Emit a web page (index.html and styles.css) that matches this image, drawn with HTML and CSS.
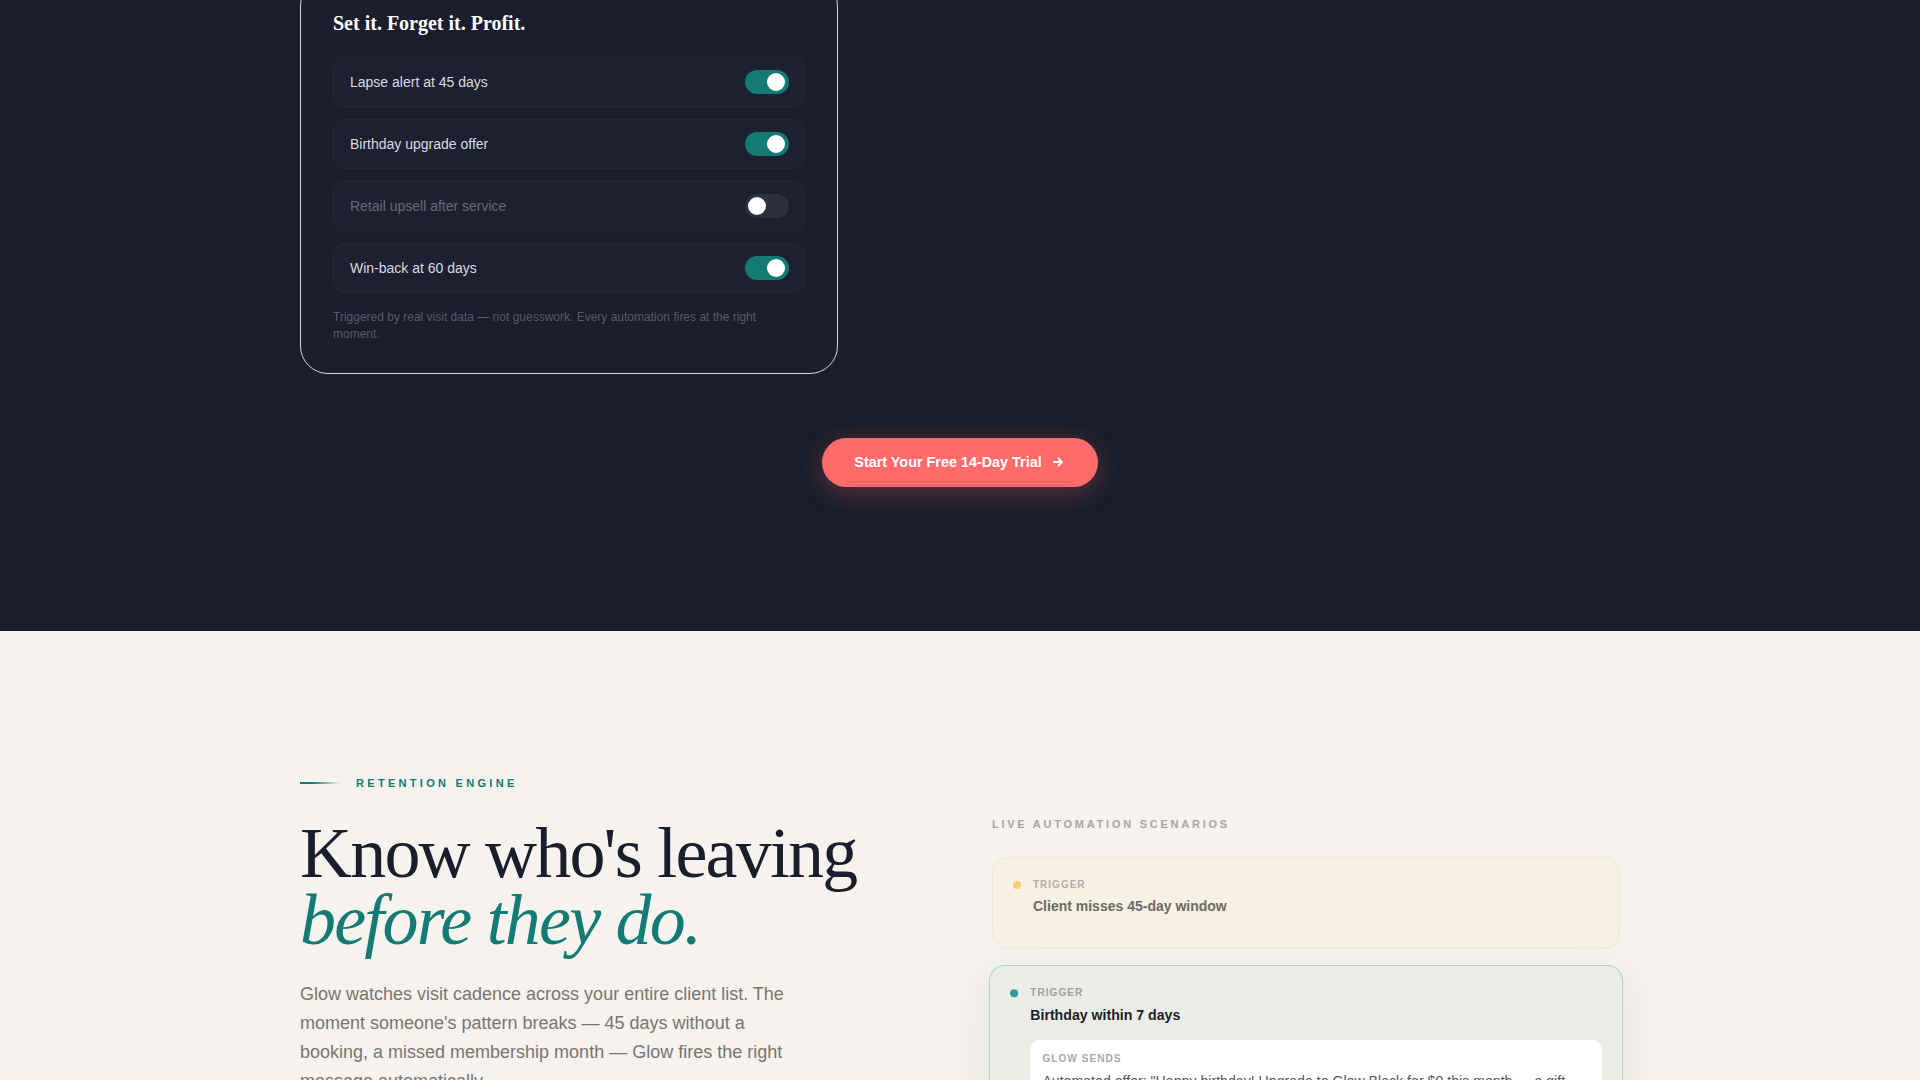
FILE: index.html
```html
<!DOCTYPE html>
<html lang="en">
<head>
  <meta charset="UTF-8">
  <meta name="viewport" content="width=device-width, initial-scale=1.0">
  <title>Glow — Retention</title>
  <link rel="stylesheet" href="styles.css">
</head>
<body>
  <section class="dark-section">
    <div class="wrap">
      <div class="automation-card">
        <h3>Set it. Forget it. Profit.</h3>
        <ul class="toggle-list">
          <li class="toggle-row">
            <span>Lapse alert at 45 days</span>
            <span class="switch on"></span>
          </li>
          <li class="toggle-row">
            <span>Birthday upgrade offer</span>
            <span class="switch on"></span>
          </li>
          <li class="toggle-row off">
            <span>Retail upsell after service</span>
            <span class="switch"></span>
          </li>
          <li class="toggle-row">
            <span>Win-back at 60 days</span>
            <span class="switch on"></span>
          </li>
        </ul>
        <p class="card-note">Triggered by real visit data — not guesswork. Every automation fires at the right moment.</p>
      </div>

      <div class="cta-row">
        <a class="cta-button" href="#">
          Start Your Free 14-Day Trial
          <svg width="12" height="12" viewBox="0 0 12 12" fill="none" stroke="currentColor" stroke-width="1.8" stroke-linecap="round" stroke-linejoin="round">
            <path d="M2 6h8"/>
            <path d="M6.5 2.5 10 6 6.5 9.5"/>
          </svg>
        </a>
      </div>
    </div>
  </section>

  <section class="light-section">
    <div class="wrap retention-grid">
      <div class="retention-copy">
        <div class="eyebrow">
          <span class="eyebrow-line"></span>
          <span>RETENTION ENGINE</span>
        </div>
        <h2>Know who's leaving <em>before they do.</em></h2>
        <p>Glow watches visit cadence across your entire client list. The moment someone's pattern breaks — 45 days without a booking, a missed membership month — Glow fires the right message automatically.</p>
      </div>

      <div class="scenarios">
        <div class="scenarios-label">LIVE AUTOMATION SCENARIOS</div>

        <div class="scenario idle">
          <span class="dot amber"></span>
          <div class="scenario-body">
            <div class="scenario-kicker">TRIGGER</div>
            <div class="scenario-title">Client misses 45-day window</div>
          </div>
        </div>

        <div class="scenario active">
          <span class="dot teal"></span>
          <div class="scenario-body">
            <div class="scenario-kicker">TRIGGER</div>
            <div class="scenario-title">Birthday within 7 days</div>
            <div class="sends-box">
              <div class="scenario-kicker">GLOW SENDS</div>
              <p>Automated offer: "Happy birthday! Upgrade to Glow Black for $0 this month — a gift from us to you." Sent by text and email, 7 days ahead.</p>
            </div>
          </div>
        </div>
      </div>
    </div>
  </section>
</body>
</html>
```

FILE: styles.css
```css
/* colours */
:root {
  --navy: #1a1d2b;
  --navy-row: #1d2030;
  --teal: #137a74;
  --coral: #ff6b6b;
  --cream: #f6f2ee;
  --wrap-width: 1320px;
}

* {
  box-sizing: border-box;
}

body {
  margin: 0;
  font-family: "Liberation Sans", Arial, sans-serif;
  background-color: var(--cream);
}

.wrap {
  max-width: var(--wrap-width);
  margin: 0 auto;
}

/* dark automation section */
.dark-section {
  background-color: var(--navy);
  padding-bottom: 144px;
  overflow: hidden;
}

.automation-card {
  width: 538px;
  margin-top: -22px;
  padding: 32px 32px 30px;
  border: 1px solid #d6d7de;
  border-radius: 28px;
}

.automation-card h3 {
  margin: 0 0 22px;
  font-family: "Liberation Serif", "Times New Roman", serif;
  font-size: 20px;
  line-height: 24px;
  font-weight: 700;
  color: #fff;
}

.toggle-list {
  list-style: none;
  margin: 0;
  padding: 0;
  display: flex;
  flex-direction: column;
  gap: 12px;
}

.toggle-row {
  display: flex;
  align-items: center;
  justify-content: space-between;
  padding: 12px 15px 12px 16px;
  background-color: var(--navy-row);
  border: 1px solid #252838;
  border-radius: 12px;
  font-size: 14px;
  color: #d9dae0;
}

.toggle-row.off {
  color: #676b7a;
}

.switch {
  position: relative;
  width: 44px;
  height: 24px;
  border-radius: 12px;
  background-color: #2c2f3e;
}

.switch::after {
  content: "";
  position: absolute;
  top: 3px;
  left: 3px;
  width: 18px;
  height: 18px;
  border-radius: 50%;
  background-color: #fff;
}

.switch.on {
  background-color: var(--teal);
}

.switch.on::after {
  left: 22px;
}

.card-note {
  max-width: 440px;
  margin: 16px 0 0;
  font-size: 12px;
  line-height: 1.4;
  color: #575c6c;
}

.cta-row {
  display: flex;
  justify-content: center;
  margin-top: 64px;
}

.cta-button {
  display: inline-flex;
  align-items: center;
  gap: 10px;
  padding: 16px 34px 16px 32px;
  border-radius: 999px;
  background-color: var(--coral);
  color: #fff;
  font-size: 14.4px;
  line-height: 17px;
  font-weight: 700;
  text-decoration: none;
  box-shadow: 0 6px 24px rgba(255, 107, 107, 0.28);
}

/* light retention section */
.light-section {
  padding: 145px 0 120px;
  overflow: hidden;
}

.retention-grid {
  display: grid;
  grid-template-columns: 1fr 1fr;
  gap: 64px;
}

.eyebrow {
  display: flex;
  align-items: center;
  gap: 16px;
  font-size: 11px;
  line-height: 14px;
  font-weight: 700;
  letter-spacing: 0.3em;
  color: var(--teal);
}

.eyebrow-line {
  width: 40px;
  height: 2px;
  background: linear-gradient(90deg, var(--teal) 30%, rgba(19, 122, 116, 0));
}

.retention-copy h2 {
  margin: 30px 0 0;
  font-family: "Liberation Serif", "Times New Roman", serif;
  font-size: 72px;
  line-height: 67px;
  font-weight: 400;
  letter-spacing: -1.8px;
  color: var(--navy);
}

.retention-copy h2 em {
  display: block;
  color: var(--teal);
}

.retention-copy p {
  max-width: 500px;
  margin: 26px 0 0;
  font-size: 18px;
  line-height: 29px;
  color: #7a756f;
}

.scenarios {
  padding-top: 41px;
}

.scenarios-label {
  margin-bottom: 26px;
  font-size: 11px;
  line-height: 14px;
  font-weight: 700;
  letter-spacing: 0.25em;
  color: #aaa49e;
}

.scenario {
  display: flex;
  gap: 12px;
  padding: 20px;
  border-radius: 16px;
  border: 1px solid transparent;
}

.scenario + .scenario {
  margin-top: 16px;
}

.scenario.idle {
  padding-bottom: 33px;
  background-color: #f7f1e5;
  border-color: #f1e8cf;
}

.scenario.active {
  background-color: #ebebe8;
  border-color: #a6d4c7;
  box-shadow: 0 12px 40px rgba(60, 40, 20, 0.08);
  transform: scale(1.01);
  transform-origin: center top;
}

.dot {
  flex: none;
  width: 8px;
  height: 8px;
  margin-top: 3px;
  border-radius: 50%;
}

.dot.amber {
  background-color: #f6cd73;
}

.dot.teal {
  background-color: #2a9e9a;
}

.scenario-body {
  flex: 1;
}

.scenario-kicker {
  font-size: 10px;
  line-height: 14px;
  font-weight: 700;
  letter-spacing: 0.1em;
  color: #a29d97;
}

.scenario-title {
  margin-top: 6px;
  font-size: 14px;
  line-height: 17px;
  font-weight: 700;
  color: #1c1e28;
}

.scenario.idle .scenario-kicker {
  color: #b1aca5;
}

.scenario.idle .scenario-title {
  color: #6e6963;
}

.sends-box {
  margin-top: 16px;
  padding: 12px;
  background-color: #fff;
  border-radius: 10px;
}

.sends-box .scenario-kicker {
  color: #a8a8a8;
}

.sends-box p {
  margin: 5px 0 0;
  font-size: 14px;
  line-height: 1.5;
  color: #55565e;
}
```
